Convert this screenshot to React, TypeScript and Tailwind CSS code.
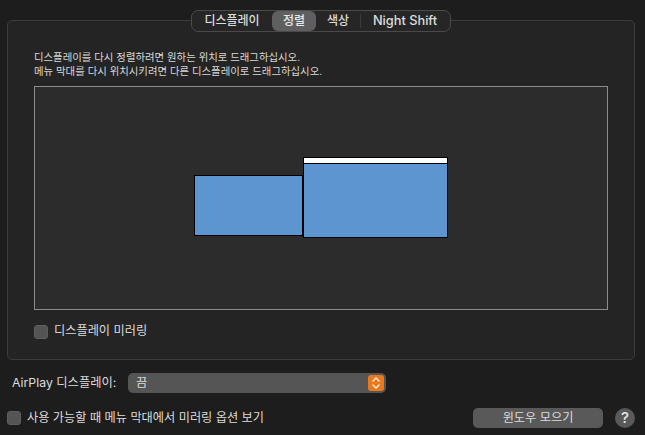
const font = { fontFamily: '"Inter", "Noto Sans CJK KR", sans-serif' };

const tabs = [
  { label: "디스플레이", cls: "w-[80px] text-[12px]" },
  { label: "정렬", cls: "w-[44px] text-[12px] rounded-[6px] bg-[#5f5f5f] text-[#e8e8e8]" },
  { label: "색상", cls: "w-[44px] text-[12px]" },
  { label: "Night Shift", cls: "w-[90px] text-[12.8px]" },
];

function Checkbox() {
  return <span className="block w-[14px] h-[14px] shrink-0 rounded-[3px] bg-[#545454] border border-[#5e5e5e]" />;
}

export default function App() {
  return (
    <div
      className="w-[645px] h-[435px] overflow-hidden bg-[#1d1d1d] text-[#dcdcdc] pl-[7px] pr-[10px] pt-[10px] flex flex-col"
      style={font}
    >
      <div className="relative z-10 self-center flex items-center h-[22px] w-[260px] rounded-[7px] border border-[#4a4a4a] bg-[#262626] mb-[-12px]">
        {tabs.map((t, i) => (
          <div
            key={t.label}
            className={`${t.cls} h-[20px] flex items-center justify-center font-medium ${
              i === 3 ? "relative" : ""
            }`}
          >
            {i === 3 && <span className="absolute left-0 top-[3px] h-[14px] w-px bg-[#3a3a3a]" />}
            {t.label}
          </div>
        ))}
      </div>

      <div className="h-[340px] rounded-[5px] border border-[#3c3c3c] bg-[#242424] pt-[30px] px-[26px]">
        <div className="text-[10.4px] leading-[14px] text-[#d8d8d8]">
          <p>디스플레이를 다시 정렬하려면 원하는 위치로 드래그하십시오.</p>
          <p>메뉴 막대를 다시 위치시키려면 다른 디스플레이로 드래그하십시오.</p>
        </div>

        <div className="relative mt-[7px] w-[574px] h-[224px] border border-[#8c8c8c] bg-[#2c2c2c]">
          <div className="absolute left-[159px] top-[88px] w-[109px] h-[61px] border border-black bg-[#5d95d1]" />
          <div className="absolute left-[268px] top-[70px] w-[145px] h-[81px] border border-black bg-[#5d95d1]">
            <div className="h-[5px] bg-white border-b border-black box-content" />
          </div>
        </div>

        <div className="mt-[12px] flex items-center gap-[6px] text-[12.2px]">
          <Checkbox />
          <span className="pb-[2px]">디스플레이 미러링</span>
        </div>
      </div>

      <div className="mt-[13px] flex items-center pl-[5px] text-[12.3px]">
        <span className="w-[116px]">AirPlay 디스플레이:</span>
        <div className="w-[258px] h-[20px] rounded-[5px] bg-[#555555] flex items-center justify-between pl-[8px] pr-[2px]">
          <span>끔</span>
          <span className="w-[16px] h-[16px] rounded-[3px] bg-[#e8791f] flex items-center justify-center">
            <svg width="10" height="14" viewBox="0 0 10 14" fill="none" stroke="#fdf0e0" strokeWidth="1.4" strokeLinecap="round" strokeLinejoin="round">
              <path d="M2 5 L5 2 L8 5" />
              <path d="M2 9 L5 12 L8 9" />
            </svg>
          </span>
        </div>
      </div>

      <div className="mt-[15px] flex items-center text-[12.2px]">
        <Checkbox />
        <span className="ml-[6px]">사용 가능할 때 메뉴 막대에서 미러링 옵션 보기</span>
        <div className="ml-auto w-[130px] h-[20px] rounded-[5px] bg-[#595959] flex items-center justify-center">
          윈도우 모으기
        </div>
        <div className="ml-[12px] w-[20px] h-[20px] rounded-full bg-[#595959] flex items-center justify-center text-[15px] font-medium text-[#e8e8e8]">
          ?
        </div>
      </div>
    </div>
  );
}
